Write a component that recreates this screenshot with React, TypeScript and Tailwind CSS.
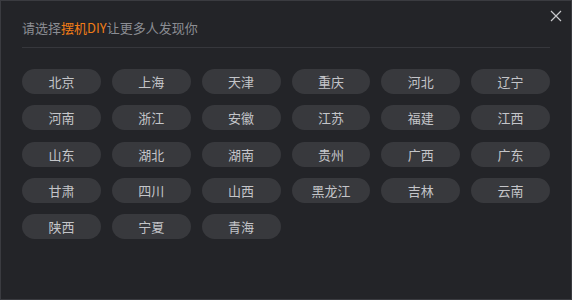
const provinces = [
  "北京", "上海", "天津", "重庆", "河北", "辽宁",
  "河南", "浙江", "安徽", "江苏", "福建", "江西",
  "山东", "湖北", "湖南", "贵州", "广西", "广东",
  "甘肃", "四川", "山西", "黑龙江", "吉林", "云南",
  "陕西", "宁夏", "青海",
];

export default function App() {
  return (
    <div
      className="relative w-[572px] h-[300px] bg-[#232428] border border-[#3a3b40] overflow-hidden"
      style={{ fontFamily: '"Noto Sans CJK SC", "Noto Sans", sans-serif' }}
    >
      {/* Close */}
      <button className="absolute right-[9px] top-[9px] w-[12px] h-[12px] flex items-center justify-center text-[#c8c9cc]">
        <svg viewBox="0 0 12 12" className="w-[12px] h-[12px]" fill="none" stroke="currentColor" strokeWidth={1.2}>
          <path d="M1 1l10 10M11 1L1 11" />
        </svg>
      </button>

      <div className="px-[21px] pt-[17px]">
        {/* Header */}
        <div className="h-[19px] flex items-center text-[13px] leading-[19px] text-[#8b8d93]">
          请选择<span className="text-[#f07c17]">摆机DIY</span>让更多人发现你
        </div>
        <div className="mt-[10px] h-px bg-[#36373c] w-[528px]" />

        {/* Provinces */}
        <div className="mt-[21px] grid grid-cols-6 gap-x-[11px] gap-y-[11.3px] w-[528px]">
          {provinces.map((p) => (
            <button
              key={p}
              className="h-[25px] rounded-full bg-[#38393d] text-[13px] leading-[25px] text-[#c4c5c9] text-center"
            >
              {p}
            </button>
          ))}
        </div>
      </div>
    </div>
  );
}
